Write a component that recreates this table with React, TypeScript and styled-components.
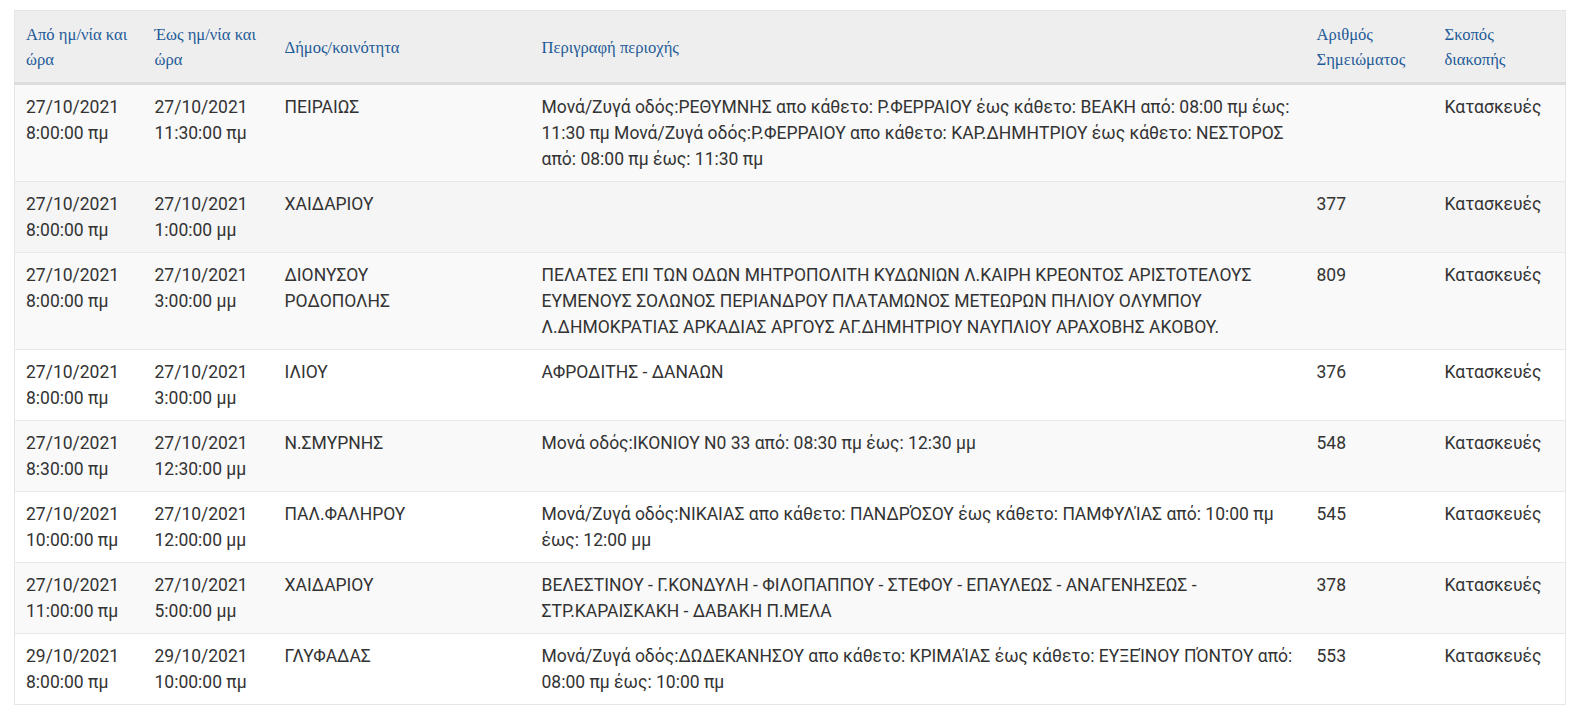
import React from "react";
import styled, { createGlobalStyle } from "styled-components";

const Global = createGlobalStyle`
  html, body { margin: 0; padding: 0; background: #fff; }
  body { font-family: Roboto, "Noto Sans", sans-serif; color: #333; }
`;

const Page = styled.div`
  padding: 10px 15px 14px 14px;
`;

const Table = styled.table`
  width: 100%;
  table-layout: fixed;
  border-collapse: collapse;
  border: 1px solid #e6e6e6;
  font-size: 17.5px;
  line-height: 26px;
`;

const HeadCell = styled.th`
  background: #eeeeee;
  color: #1f5b98;
  font-family: "Liberation Serif", "Times New Roman", serif;
  font-weight: normal;
  font-size: 16.6px;
  line-height: 25px;
  text-align: left;
  vertical-align: middle;
  padding: 9px 11px 8px 11px;
  height: 54px;
  border-bottom: 3px solid #dddddd;
`;

const Row = styled.tr<{ $bg: string }>`
  background: ${(p) => p.$bg};
`;

const Cell = styled.td`
  vertical-align: top;
  padding: 9px 11px 9px 11px;
  border-top: 1px solid #e8e8e8;
  color: #333;
  word-wrap: break-word;
`;

type Item = {
  from: [string, string];
  to: [string, string];
  area: string[];
  desc: string;
  num: string;
  purpose: string;
};

const rows: Item[] = [
  {
    from: ["27/10/2021", "8:00:00 πμ"],
    to: ["27/10/2021", "11:30:00 πμ"],
    area: ["ΠΕΙΡΑΙΩΣ"],
    desc:
      "Μονά/Ζυγά οδός:ΡΕΘΥΜΝΗΣ απο κάθετο: Ρ.ΦΕΡΡΑΙΟΥ έως κάθετο: ΒΕΑΚΗ από: 08:00 πμ έως: 11:30 πμ Μονά/Ζυγά οδός:Ρ.ΦΕΡΡΑΙΟΥ απο κάθετο: ΚΑΡ.ΔΗΜΗΤΡΙΟΥ έως κάθετο: ΝΕΣΤΟΡΟΣ από: 08:00 πμ έως: 11:30 πμ",
    num: "",
    purpose: "Κατασκευές",
  },
  {
    from: ["27/10/2021", "8:00:00 πμ"],
    to: ["27/10/2021", "1:00:00 μμ"],
    area: ["ΧΑΙΔΑΡΙΟΥ"],
    desc: "",
    num: "377",
    purpose: "Κατασκευές",
  },
  {
    from: ["27/10/2021", "8:00:00 πμ"],
    to: ["27/10/2021", "3:00:00 μμ"],
    area: ["ΔΙΟΝΥΣΟΥ", "ΡΟΔΟΠΟΛΗΣ"],
    desc:
      "ΠΕΛΑΤΕΣ ΕΠΙ ΤΩΝ ΟΔΩΝ ΜΗΤΡΟΠΟΛΙΤΗ ΚΥΔΩΝΙΩΝ Λ.ΚΑΙΡΗ ΚΡΕΟΝΤΟΣ ΑΡΙΣΤΟΤΕΛΟΥΣ ΕΥΜΕΝΟΥΣ ΣΟΛΩΝΟΣ ΠΕΡΙΑΝΔΡΟΥ ΠΛΑΤΑΜΩΝΟΣ ΜΕΤΕΩΡΩΝ ΠΗΛΙΟΥ ΟΛΥΜΠΟΥ Λ.ΔΗΜΟΚΡΑΤΙΑΣ ΑΡΚΑΔΙΑΣ ΑΡΓΟΥΣ ΑΓ.ΔΗΜΗΤΡΙΟΥ ΝΑΥΠΛΙΟΥ ΑΡΑΧΟΒΗΣ ΑΚΟΒΟΥ.",
    num: "809",
    purpose: "Κατασκευές",
  },
  {
    from: ["27/10/2021", "8:00:00 πμ"],
    to: ["27/10/2021", "3:00:00 μμ"],
    area: ["ΙΛΙΟΥ"],
    desc: "ΑΦΡΟΔΙΤΗΣ - ΔΑΝΑΩΝ",
    num: "376",
    purpose: "Κατασκευές",
  },
  {
    from: ["27/10/2021", "8:30:00 πμ"],
    to: ["27/10/2021", "12:30:00 μμ"],
    area: ["Ν.ΣΜΥΡΝΗΣ"],
    desc: "Μονά οδός:ΙΚΟΝΙΟΥ Ν0 33 από: 08:30 πμ έως: 12:30 μμ",
    num: "548",
    purpose: "Κατασκευές",
  },
  {
    from: ["27/10/2021", "10:00:00 πμ"],
    to: ["27/10/2021", "12:00:00 μμ"],
    area: ["ΠΑΛ.ΦΑΛΗΡΟΥ"],
    desc:
      "Μονά/Ζυγά οδός:ΝΙΚΑΙΑΣ απο κάθετο: ΠΑΝΔΡΌΣΟΥ έως κάθετο: ΠΑΜΦΥΛΊΑΣ από: 10:00 πμ έως: 12:00 μμ",
    num: "545",
    purpose: "Κατασκευές",
  },
  {
    from: ["27/10/2021", "11:00:00 πμ"],
    to: ["27/10/2021", "5:00:00 μμ"],
    area: ["ΧΑΙΔΑΡΙΟΥ"],
    desc:
      "ΒΕΛΕΣΤΙΝΟΥ - Γ.ΚΟΝΔΥΛΗ - ΦΙΛΟΠΑΠΠΟΥ - ΣΤΕΦΟΥ - ΕΠΑΥΛΕΩΣ - ΑΝΑΓΕΝΗΣΕΩΣ - ΣΤΡ.ΚΑΡΑΙΣΚΑΚΗ - ΔΑΒΑΚΗ Π.ΜΕΛΑ",
    num: "378",
    purpose: "Κατασκευές",
  },
  {
    from: ["29/10/2021", "8:00:00 πμ"],
    to: ["29/10/2021", "10:00:00 πμ"],
    area: ["ΓΛΥΦΑΔΑΣ"],
    desc:
      "Μονά/Ζυγά οδός:ΔΩΔΕΚΑΝΗΣΟΥ απο κάθετο: ΚΡΙΜΑΊΑΣ έως κάθετο: ΕΥΞΕΊΝΟΥ ΠΌΝΤΟΥ από: 08:00 πμ έως: 10:00 πμ",
    num: "553",
    purpose: "Κατασκευές",
  },
];

const widths = [129, 130, 257, 775, 128, 132];

const bgFor = (i: number) => (i === 1 ? "#f5f5f5" : i % 2 === 0 ? "#f9f9f9" : "#ffffff");

const Lines = ({ parts }: { parts: string[] }) => (
  <>
    {parts.map((p, i) => (
      <React.Fragment key={i}>
        {i > 0 && <br />}
        {p}
      </React.Fragment>
    ))}
  </>
);

export default function App() {
  return (
    <Page>
      <Global />
      <Table>
        <colgroup>
          {widths.map((w, i) => (
            <col key={i} style={{ width: w }} />
          ))}
        </colgroup>
        <thead>
          <tr>
            <HeadCell>Από ημ/νία και ώρα</HeadCell>
            <HeadCell>Έως ημ/νία και ώρα</HeadCell>
            <HeadCell>Δήμος/κοινότητα</HeadCell>
            <HeadCell>Περιγραφή περιοχής</HeadCell>
            <HeadCell>Αριθμός Σημειώματος</HeadCell>
            <HeadCell>Σκοπός διακοπής</HeadCell>
          </tr>
        </thead>
        <tbody>
          {rows.map((r, i) => (
            <Row key={i} $bg={bgFor(i)}>
              <Cell>
                <Lines parts={r.from} />
              </Cell>
              <Cell>
                <Lines parts={r.to} />
              </Cell>
              <Cell>
                <Lines parts={r.area} />
              </Cell>
              <Cell>{r.desc}</Cell>
              <Cell>{r.num}</Cell>
              <Cell>{r.purpose}</Cell>
            </Row>
          ))}
        </tbody>
      </Table>
    </Page>
  );
}
